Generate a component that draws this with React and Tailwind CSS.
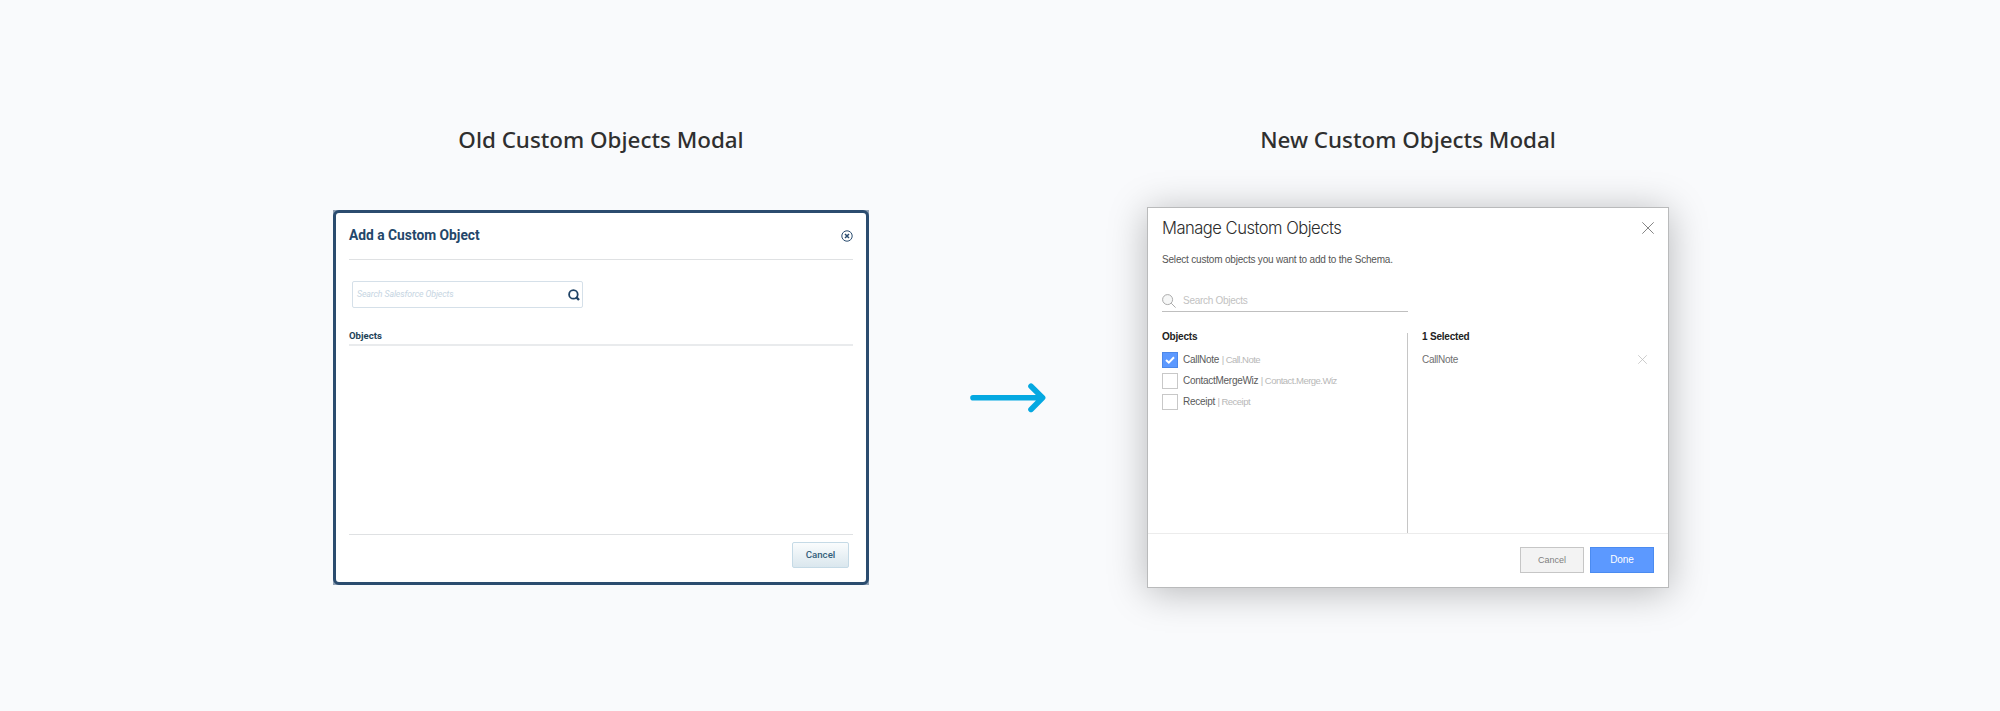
function CloseIcon({ className }) {
  return (
    <svg viewBox="0 0 12 12" className={className} fill="none" stroke="currentColor">
      <path d="M0.3 0.3 11.7 11.7M11.7 0.3 0.3 11.7" />
    </svg>
  );
}

function OldModal() {
  return (
    <div className="bg-[#8fa0b4] w-[536px] h-[375px]">
      <div className="flex h-full flex-col rounded-[6px] border-[3px] border-[#2b4c6f] bg-white px-[13px] font-[Roboto,sans-serif]">
        <div className="flex h-[47px] items-center justify-between border-b border-[#dfe1e3]">
          <h2 className="text-[13.8px] font-bold leading-none text-[#24476a]">Add a Custom Object</h2>
          <svg viewBox="0 0 12 12" className="mb-px size-[12px]" fill="none" stroke="#2b4d70">
            <circle cx="6" cy="6" r="5.2" strokeWidth="1" />
            <path d="M4 4 8 8M8 4 4 8" strokeWidth="1.5" />
          </svg>
        </div>
        <div className="ml-[3px] mt-[21px] flex h-[27px] w-[231px] items-center justify-between rounded-[2px] border border-[#d5e0e9] pl-[4px] pr-[2px]">
          <span className="text-[8.8px] italic leading-none tracking-[-0.015em] text-[#c6d5e2]">Search Salesforce Objects</span>
          <svg viewBox="0 0 12 12" className="size-[12px]" fill="none" stroke="#1f4265">
            <circle cx="5.4" cy="5.4" r="4.3" strokeWidth="1.8" />
            <path d="M8.2 8.2 11 11" strokeWidth="2.4" />
          </svg>
        </div>
        <h3 className="mt-[22px] border-b-2 border-[#e9ebed] pb-[3px] text-[9.6px] font-bold leading-[11px] text-[#1d4257]">Objects</h3>
        <div className="grow" />
        <div className="flex h-[48px] justify-end border-t border-[#dfe1e3] pr-[4px] pt-[7px]">
          <button className="h-[26px] w-[57px] rounded-[2px] border border-[#c5dae6] bg-linear-to-b from-[#fafcfd] to-[#dae7ee] text-[9.7px] font-medium leading-none text-[#33607a]">
            Cancel
          </button>
        </div>
      </div>
    </div>
  );
}

const objects = [
  { name: "CallNote", api: "Call.Note", checked: true },
  { name: "ContactMergeWiz", api: "Contact.Merge.Wiz", checked: false },
  { name: "Receipt", api: "Receipt", checked: false },
];

function ObjectRow({ name, api, checked }) {
  return (
    <li className="flex h-[21px] items-center">
      {checked ? (
        <span className="flex size-[16px] items-center justify-center border border-[#4d88e8] bg-[#5c99ff]">
          <svg viewBox="0 0 10 8" className="h-[8px] w-[10px]" fill="none" stroke="white" strokeWidth="2">
            <path d="M1 4 3.8 6.6 9 1.2" />
          </svg>
        </span>
      ) : (
        <span className="size-[16px] border border-[#c8c8c8] bg-white" />
      )}
      <span className="ml-[5.5px] text-[10px] leading-none tracking-[-0.028em] text-[#5a5a5a]">{name}</span>
      <span className="ml-[2.5px] whitespace-pre text-[9.5px] leading-none tracking-[-0.055em] text-[#b8b8b8]">| {api}</span>
    </li>
  );
}

function NewModal() {
  return (
    <div className="flex h-[381px] w-[522px] flex-col border border-[#b9babb] bg-white font-['Liberation_Sans',Arial,sans-serif] shadow-[0_4px_36px_rgba(0,0,0,0.27)]">
      <header className="flex justify-between pl-[14px] pr-[14px] pt-[14px]">
        <h2 className="-mt-px font-[Inter,sans-serif] text-[16.6px] font-light leading-[14px] tracking-[-0.52px] text-[#2c2c2c]">
          Manage Custom Objects
        </h2>
        <CloseIcon className="size-[12px] text-[#858585]" />
      </header>
      <p className="ml-[14px] mt-[19px] text-[10px] leading-[12px] tracking-[-0.019em] text-[#555555]">
        Select custom objects you want to add to the Schema.
      </p>
      <div className="ml-[14px] mt-[26px] flex h-[20px] w-[246px] items-center border-b border-[#bfbfbf] pb-[2px]">
        <svg viewBox="0 0 14 14" className="size-[14px]" fill="none" stroke="#a3a3a3" strokeWidth="0.9">
          <circle cx="5.6" cy="5.6" r="5" fill="#f6f7f7" />
          <path d="M9.2 9.2 13.6 13.6" />
        </svg>
        <span className="ml-[7px] text-[10px] leading-none tracking-[-0.028em] text-[#c2c2c2]">Search Objects</span>
      </div>
      <div className="mt-[21px] flex h-[200px]">
        <section className="w-[260px] border-r border-[#c6c6c6] pl-[14px]">
          <h3 className="text-[10px] font-bold leading-[8px] tracking-[-0.02em] text-[#222]">Objects</h3>
          <ul className="-ml-[0.5px] mt-[8px]">
            {objects.map((o) => (
              <ObjectRow key={o.name} {...o} />
            ))}
          </ul>
        </section>
        <section className="grow pl-[14px] pr-[21px]">
          <h3 className="text-[10px] font-bold leading-[8px] tracking-[-0.02em] text-[#222]">1 Selected</h3>
          <div className="mt-[8px] flex h-[21px] items-center justify-between">
            <span className="text-[10px] leading-none tracking-[-0.03em] text-[#707070]">CallNote</span>
            <CloseIcon className="size-[9px] text-[#bcbcbc]" />
          </div>
        </section>
      </div>
      <footer className="flex grow justify-end gap-[6px] border-t border-[#ececec] pr-[14px] pt-[13px]">
        <button className="h-[26px] w-[64px] border border-[#c6c6c6] bg-[#f3f3f3] text-[9px] leading-none text-[#808080]">Cancel</button>
        <button className="h-[26px] w-[64px] border border-[#4b8bf0] bg-[#5c99ff] text-[10px] leading-none tracking-[-0.01em] text-white">Done</button>
      </footer>
    </div>
  );
}

export default function App() {
  return (
    <div className="flex h-[711px] w-[2000px] items-start overflow-hidden bg-[#f9fafc]">
      <section className="ml-[333px] w-[536px] pt-[124px]">
        <h1 className="text-center font-['Noto_Sans','Open_Sans',sans-serif] text-[22.4px] font-medium leading-[32px] text-[#2f2f2f]">
          Old Custom Objects Modal
        </h1>
        <div className="mt-[54px]">
          <OldModal />
        </div>
      </section>
      <svg viewBox="0 0 76 30" className="ml-[101px] mt-[383px] h-[30px] w-[76px]" fill="none" stroke="#05a8e1" strokeWidth="5.6" strokeLinecap="round" strokeLinejoin="round">
        <path d="M3 14.8H72M61 3.2 72.6 14.8 61 26.4" />
      </svg>
      <section className="ml-[101px] w-[522px] pt-[124px]">
        <h1 className="text-center font-['Noto_Sans','Open_Sans',sans-serif] text-[22.4px] font-medium leading-[32px] text-[#2f2f2f]">
          New Custom Objects Modal
        </h1>
        <div className="mt-[51px]">
          <NewModal />
        </div>
      </section>
    </div>
  );
}
